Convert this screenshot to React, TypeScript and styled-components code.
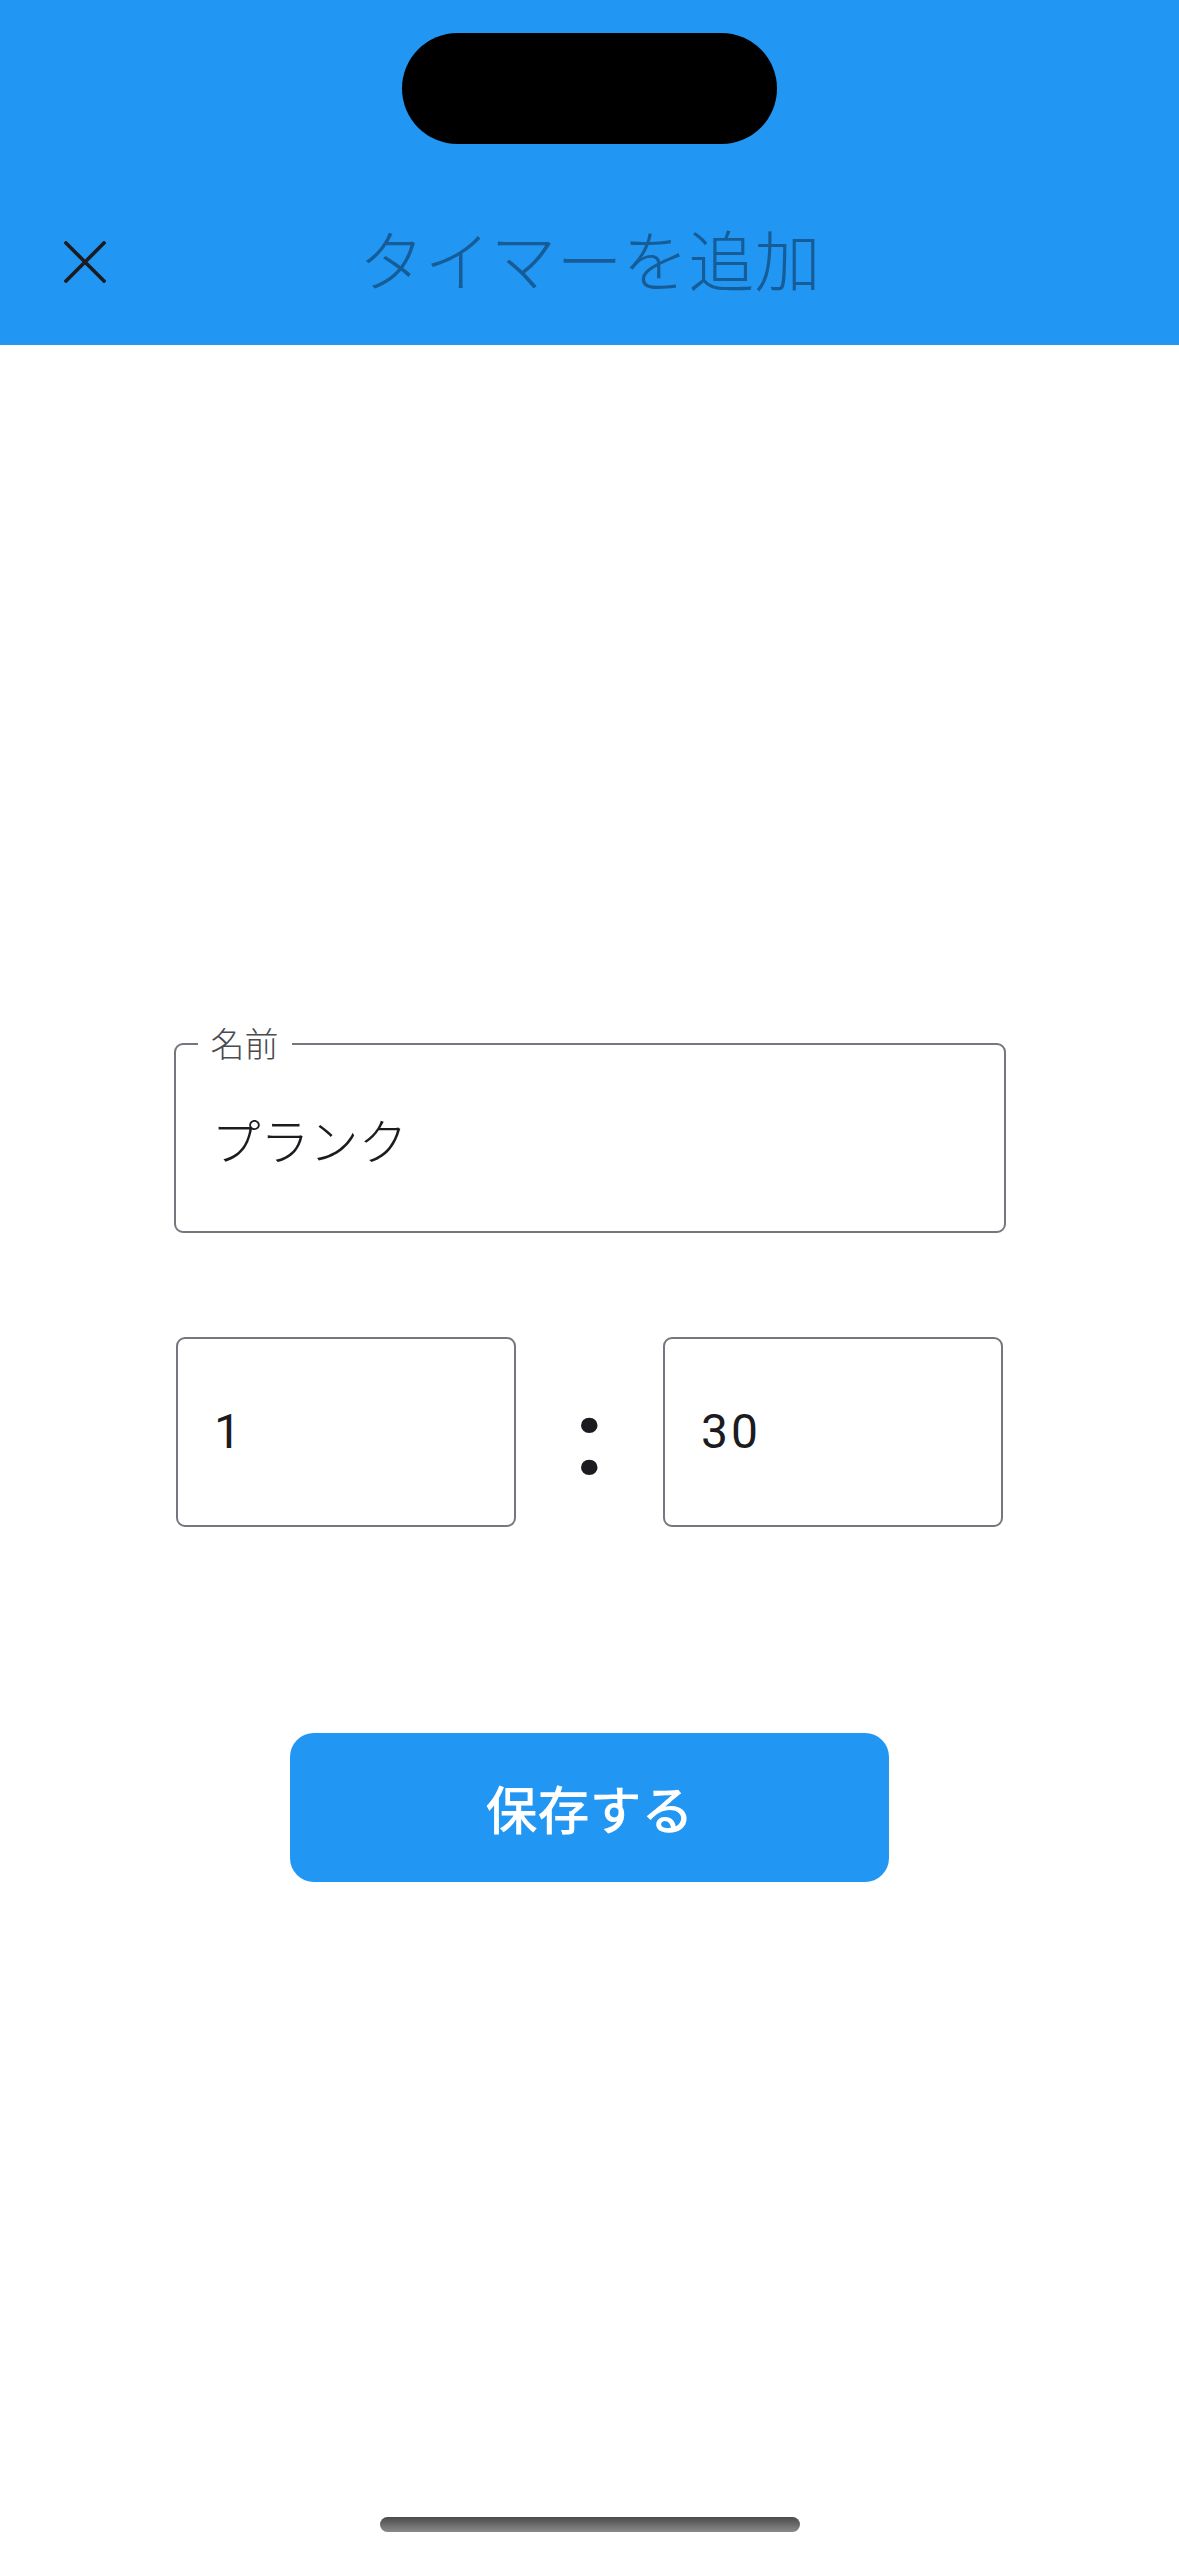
import styled, { createGlobalStyle } from 'styled-components';

const GlobalStyle = createGlobalStyle`
	html, body {
		margin: 0;
		padding: 0;
		background: #ffffff;
	}
	body {
		font-family: 'Noto Sans CJK JP', 'Noto Sans', sans-serif;
		color: #1c1b1f;
	}
	* {
		box-sizing: border-box;
	}
`;

const Screen = styled.div`
	width: 1179px;
	height: 2556px;
	display: flex;
	flex-direction: column;
	background: #ffffff;
`;

const Header = styled.header`
	height: 345px;
	background: #2196f3;
	display: flex;
	flex-direction: column;
`;

const StatusArea = styled.div`
	height: 178px;
	padding-top: 33px;
	display: flex;
	justify-content: center;
`;

const Island = styled.div`
	width: 375px;
	height: 111px;
	border-radius: 56px;
	background: #000000;
`;

const AppBar = styled.div`
	flex: 1;
	display: grid;
	grid-template-columns: 170px 1fr 170px;
	align-items: center;
`;

const CloseButton = styled.button`
	border: none;
	background: none;
	padding: 0 0 0 64px;
	display: flex;
	align-items: center;
	color: #1c1b1f;
`;

const Title = styled.h1`
	margin: 0 0 10px;
	text-align: center;
	font-size: 66px;
	font-weight: 300;
	line-height: 1;
	color: #165c96;
	letter-spacing: 0;
`;

const Body = styled.main`
	flex: 1;
	display: flex;
	flex-direction: column;
	align-items: center;
	padding-top: 698px;
`;

const NameField = styled.div`
	position: relative;
	width: 832px;
	height: 190px;
	border: 2.5px solid #79747e;
	border-radius: 9px;
	display: flex;
	align-items: center;
	padding-left: 36px;
`;

const FloatingLabel = styled.span`
	position: absolute;
	top: -22px;
	left: 22px;
	padding: 0 13px;
	background: #ffffff;
	font-size: 34px;
	font-weight: 300;
	line-height: 40px;
	color: #4a4a4f;
`;

const FieldValue = styled.span<{ $numeric?: boolean }>`
	font-family: ${(p) =>
		p.$numeric
			? "Roboto, 'Noto Sans CJK JP', sans-serif"
			: "'Noto Sans CJK JP', sans-serif"};
	font-size: ${(p) => (p.$numeric ? '48px' : '49px')};
	font-weight: ${(p) => (p.$numeric ? 400 : 300)};
	letter-spacing: ${(p) => (p.$numeric ? '3px' : '0')};
	color: #1c1b1f;
	line-height: 1;
`;

const TimeRow = styled.div`
	margin-top: 104px;
	width: 827px;
	display: grid;
	grid-template-columns: 340px 1fr 340px;
	align-items: center;
`;

const TimeBox = styled.div`
	height: 190px;
	border: 2.5px solid #79747e;
	border-radius: 9px;
	display: flex;
	align-items: center;
	padding-left: 36px;
`;

const Colon = styled.span`
	text-align: center;
	font-family: Roboto, sans-serif;
	font-size: 104px;
	font-weight: 700;
	line-height: 1;
	color: #1c1b1f;
	padding-top: 14px;
`;

const SaveButton = styled.button`
	margin-top: 206px;
	width: 599px;
	height: 149px;
	border: none;
	border-radius: 24px;
	background: #2196f3;
	color: #ffffff;
	font-family: 'Noto Sans CJK JP', sans-serif;
	font-size: 52px;
	font-weight: 500;
	letter-spacing: 0;
`;

const HomeArea = styled.div`
	height: 39px;
	display: flex;
	justify-content: center;
`;

const HomeIndicator = styled.div`
	width: 420px;
	height: 15px;
	border-radius: 8px;
	background: linear-gradient(#4a4a4a, #8a8a8a);
`;

const CloseIcon = () => (
	<svg width="42" height="42" viewBox="0 0 42 42">
		<path
			d="M2 2 L40 40 M40 2 L2 40"
			stroke="currentColor"
			strokeWidth="3.6"
			strokeLinecap="square"
			fill="none"
		/>
	</svg>
);

const App = () => {
	return (
		<>
			<GlobalStyle />
			<Screen>
				<Header>
					<StatusArea>
						<Island />
					</StatusArea>
					<AppBar>
						<CloseButton aria-label="閉じる">
							<CloseIcon />
						</CloseButton>
						<Title>タイマーを追加</Title>
						<div />
					</AppBar>
				</Header>
				<Body>
					<NameField>
						<FloatingLabel>名前</FloatingLabel>
						<FieldValue>プランク</FieldValue>
					</NameField>
					<TimeRow>
						<TimeBox>
							<FieldValue $numeric>1</FieldValue>
						</TimeBox>
						<Colon>:</Colon>
						<TimeBox>
							<FieldValue $numeric>30</FieldValue>
						</TimeBox>
					</TimeRow>
					<SaveButton>保存する</SaveButton>
				</Body>
				<HomeArea>
					<HomeIndicator />
				</HomeArea>
			</Screen>
		</>
	);
};

export default App;
